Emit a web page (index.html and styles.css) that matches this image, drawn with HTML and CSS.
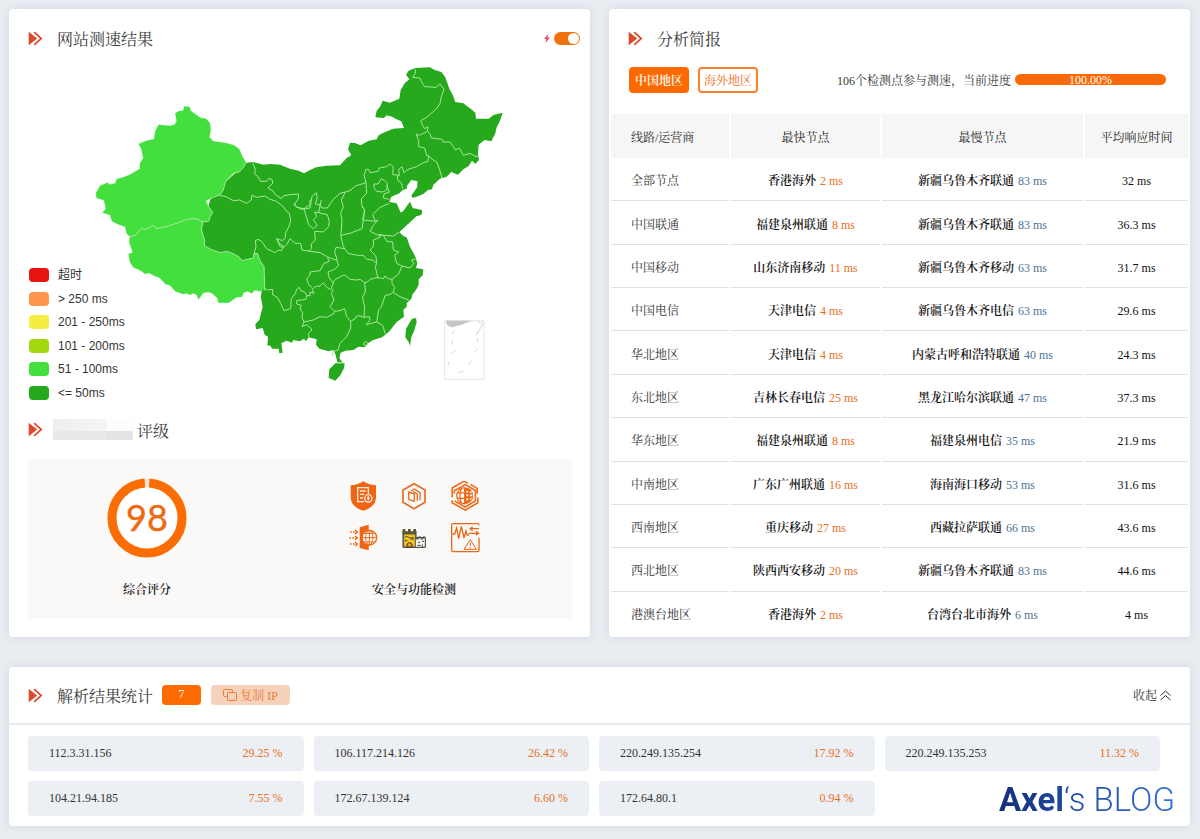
FILE: index.html
```html
<!DOCTYPE html>
<html lang="zh-CN">
<head>
<meta charset="utf-8">
<title>网站测速结果</title>
<link rel="stylesheet" href="styles.css">
</head>
<body>
<svg class="defs" aria-hidden="true">
  <symbol id="mark" viewBox="84 90 44 44"><path d="M86 92L111 112L86 132Z" fill="#dc4b2b"/><path d="M97 92l23 20-23 20" fill="none" stroke="#fff" stroke-width="5"/><path d="M102 93l21 19-21 19" fill="none" stroke="#dc4b2b" stroke-width="5"/></symbol>
</svg>
<main class="page">
  <section class="card result">
    <header class="head">
      <svg class="mark"><use href="#mark"/></svg>
      <h2 class="title">网站测速结果</h2>
      <label class="switch">
        <svg class="bolt" viewBox="0 0 6 9"><path d="M4 0L0 5h2.3L1.6 9 6 3.6H3.6z" fill="#e64b5f"/></svg>
        <input class="toggle" type="checkbox" checked aria-label="快速测速">
      </label>
    </header>
    <div class="mapbox">
      <svg class="map" viewBox="0 51 1290 999" role="img" aria-label="中国地图">
        <g fill="#26a91c">
          <path transform="translate(450 0)" d="M50 338L70 336 100 344 122 342 150 344 180 356 206 362 222 370 236 362 258 352 290 347 330 346 350 324 364 316 354 298 360 278 375 279 392 286 416 272 440 268 446 256 460 248 490 236 522 234 514 214 500 208 486 200 470 196 462 204 436 202 440 182 450 170 458 152 480 158 508 146 512 120 524 100 538 88 528 74 536 62 556 54 600 52 614 60 634 66 646 82 658 116 668 134 676 156 700 160 722 176 736 188 738 206 776 206 792 194 818 188 810 212 800 232 796 250 784 274 764 270 746 284 744 312 747 330 736 342 726 332 716 348 700 358 684 374 664 366 650 380 630 386 610 404 606 418 594 420 580 432 566 438 548 444 544 436 552 426 562 410 562 394 544 390 532 406 530 416 518 420 508 430 484 440 478 456 500 460 512 488 520 484 532 466 540 456 548 474 576 480 574 494 560 498 508 546 490 565 -60 565 -75 516 -60 450 -18 400Z"/>
          <path transform="translate(450 450)" d="M440 0L478 8 500 12 504 34 514 38 532 22 540 6 548 26 576 32 574 44 552 50 540 66 520 82 508 96 520 108 530 112 540 140 556 170 562 190 558 204 580 208 578 226 566 238 566 254 558 270 548 282 544 296 530 310 530 320 520 330 522 350 500 366 486 384 478 394 466 404 456 412 430 420 410 432 404 442 386 440 370 450 346 452 332 458 328 474 338 488 322 486 316 462 310 450 296 454 268 446 258 434 260 418 236 412 228 424 222 416 210 424 190 420 186 428 170 422 154 430 158 458 148 460 146 446 126 446 122 438 112 436 114 410 104 404 98 384 78 388 76 372 88 360 92 344 98 320 92 290 96 270 90 195 40 195 -20 170 -74 145 -86 80 -50 0Z"/>
          <path transform="translate(450 450)" d="M298 508L316 490 344 490 342 504 332 524 316 542 296 534ZM546 356L558 354 560 366 552 394 544 410 540 438 536 426 526 412 528 386Z"/>
        </g>
        <g fill="#42df3d" stroke="#42df3d" stroke-width="1">
          <path d="M312 170L328 170 332 182 348 194 362 204 378 206 390 220 392 240 388 262 400 274 440 280 462 286 478 298 486 318 498 338 490 352 478 366 462 368 446 384 436 396 430 420 420 434 400 442 378 452 386 470 398 488 390 500 386 514 368 516 350 506 320 508 296 518 285 524 265 528 240 534 228 536 222 526 212 530 200 538 184 536 166 556 150 560 140 550 136 530 118 524 96 514 90 494 68 488 78 476 72 450 50 444 48 430 60 408 82 398 90 404 106 400 110 388 130 382 150 374 180 356 180 340 190 324 184 296 176 282 200 272 222 268 226 244 236 224 250 226 270 228 284 224 290 212 286 190 296 184 310 182Z"/>
          <path d="M150 560L166 556 184 536 200 538 212 530 222 526 228 536 265 528 296 518 320 508 350 506 368 516 364 540 374 572 372 586 392 598 420 608 440 604 462 612 478 622 486 632 500 628 520 624 522 612 532 610 540 632 552 650 554 700 550 720 540 724 524 720 516 730 502 724 490 728 486 740 470 742 460 748 446 758 416 758 412 744 396 730 386 726 370 728 356 748 350 734 340 730 330 734 320 730 310 732 286 724 270 706 256 702 240 684 220 676 206 668 196 672 180 660 160 652 150 636 146 612 158 608 156 600 148 578Z"/>
        </g>
        <g fill="none" stroke="#a5e79c" stroke-width="3" stroke-linejoin="round">
          <path d="M498 338L490 352 478 366 462 368 446 384 436 396 430 420 420 434 400 442 378 452 386 470 398 488 390 500 386 514 368 516 364 540 374 572 372 586 392 598 420 608 440 604 462 612 478 622 486 632 500 628 520 624 522 612 532 610 540 632 552 650 554 700 554 722M150 560L166 556 184 536 200 538 212 530 222 526 228 536 265 528 296 518 320 508 350 506 368 516M418 436L438 440 460 452 478 450 500 460 514 450 516 436 530 442 556 438 570 448 590 454 610 470 618 482 628 490 632 512 626 532 616 550 616 564 608 572 590 566 600 582 612 590 604 602 594 600 586 608 560 596 545 574 534 568 526 572 528 590 522 612"/>
          <path transform="translate(450 0)" d="M68 338L76 358 74 372 84 380 92 394 110 394 116 386 126 388 128 400 114 414 130 424 136 434 154 446 160 438 180 434 206 432 204 448 192 464 200 470 214 478 240 474 246 440 258 428 262 442 256 462 270 464 276 474 292 474 304 456 312 446 330 430 346 426 360 422 376 408 408 398 402 376 408 358 416 358 420 368 444 364 448 354 470 350 480 342 490 350 488 374 508 376 506 358 516 350 522 368 534 358 560 350 580 338 594 334 596 318M556 58L556 70 548 82 570 84 576 98 584 110 618 112 630 102 642 118 634 140 630 160 620 176 606 188 590 202 572 212 578 226 584 236 594 230 592 244 600 252 604 264 636 268 640 276 660 276 672 292 676 300 688 294 700 316 720 310 734 318 746 320M592 244L580 250 568 256 558 252 566 272 566 290 584 294 590 316 596 318 610 330 620 336 628 356 636 384M508 376L502 380 504 392 514 398 518 416M432 402L444 402 454 386 464 392 472 400 470 420 458 426 440 424 432 414ZM470 406L478 426 462 432 460 444 478 448M408 398L410 430 394 446 396 470 404 480 398 510M346 426L334 450 340 470 332 490 336 510 334 540 332 556"/>
          <path transform="translate(450 450)" d="M192 8L200 22 222 26 232 60 236 74 250 86 262 76 250 60 260 50 254 36 266 38 270 16 274 0M240 0L240 14 222 26M266 38L292 44 298 64 296 80 280 96 254 94 256 120 244 132 244 146 236 154M140 116L150 140 162 142 170 134 180 116 196 130 212 130 216 150 240 154 270 158 292 170 310 178 320 180 326 196 314 208 294 216 298 234 310 250 304 264 310 272 304 280 312 300 300 320 314 334M344 146L318 142 314 156 322 180M332 106L340 140 354 160 382 166 400 166 410 178 428 180 440 190 436 200 444 236M398 20L404 30 400 60 396 86 360 100 332 106M400 60L436 64 428 44 450 22 478 10M436 64L444 60 430 76 420 94 440 104 460 106 490 108 508 96M440 190L438 170 430 160 420 150 430 140 430 120 450 112 448 104 460 106 470 124 488 126 490 150 506 156 494 166 500 190 516 198 540 204 552 190 544 180 556 178M516 198L506 222 486 238 474 236 464 228 460 236 442 232 420 238 412 246 404 248 390 238 380 240 360 238 346 226 340 226 316 238 308 250M404 248L406 276 398 290 400 306 404 320 402 352 390 348 380 348 376 356 362 364 350 350 344 326 330 332 314 334 310 342 290 352 270 350 250 360 222 366 216 352 218 338 210 326 214 316 200 312 200 302 228 298 230 286 240 288 240 276 252 280 246 268 256 260 270 258 280 248 290 262 304 270M230 286L224 276 212 272 208 262 200 268 196 280 184 296 182 326 162 332 152 310 142 292 128 284 128 268 112 270 104 264M222 366L216 380 230 374 240 382 246 390 236 400 236 412M362 364L362 384 350 410 330 430 324 450 308 456 308 468M402 352L418 350 420 360 408 374 424 370 440 366 458 376 466 402M440 366L446 330 454 320 466 286 480 284 490 276 494 262 486 250 486 238M490 278L510 290 536 300M292 172L298 184 282 190 270 212 240 216 240 226 230 236 236 254 246 262M400 430L408 424 414 432 406 440ZM322 488L340 488"/>
        </g>
        <g transform="translate(1020 750)" fill="none" stroke="#d5d5d5" stroke-width="3">
          <path d="M74 62H192V238H74Z" stroke="#e6e6e6"/><path d="M78 62H156L120 76 94 82 80 74Z" fill="#c6c6c6" stroke="none"/>
          <path d="M96 102l8-10M97 120v14M94 162l12-10M86 186v8M114 218l16-4M146 194l8-12M164 156l9-10M172 116v12M168 106l10-16 12-20M174 62l8 10 6-8"/>
        </g>
      </svg>
      <ul class="legend">
        <li><i class="chip timeout"></i>超时</li>
        <li><i class="chip slow"></i>&gt; 250 ms</li>
        <li><i class="chip fair"></i>201 - 250ms</li>
        <li><i class="chip good"></i>101 - 200ms</li>
        <li><i class="chip fast"></i>51 - 100ms</li>
        <li><i class="chip best"></i>&lt;= 50ms</li>
      </ul>
    </div>
    <header class="head rating-head">
      <svg class="mark"><use href="#mark"/></svg>
      <span class="masked"></span>
      <h2 class="title">评级</h2>
    </header>
    <div class="rating">
      <div class="score">
        <svg class="ring" viewBox="0 0 80 80">
          <circle cx="40" cy="40" r="35" fill="#fff" stroke="#fde3cf" stroke-width="8"/>
          <circle cx="40" cy="40" r="35" fill="none" stroke="#fb6d02" stroke-width="9" pathLength="100" stroke-dasharray="98 2" stroke-dashoffset="-1" transform="rotate(-90 40 40)"/>
          <text class="ring-text" x="40" y="53" text-anchor="middle">98</text>
        </svg>
        <p class="caption">综合评分</p>
      </div>
      <div class="checks">
        <div class="icons">
          <svg viewBox="49 47 90 90"><path d="M95 48Q76 60 57 60V98Q59 126 95 136Q131 126 133 98V60Q114 60 95 48Z" fill="#ee6614"/><g fill="none" stroke="#fde9db" stroke-width="4"><path d="M110 85V67H78V109H98M85 77H103M85 87H98M85 98H94"/><circle cx="110" cy="99" r="11"/><path d="M110 93v11M106 98h8"/></g></svg>
          <svg viewBox="202 47 90 90" fill="none" stroke="#e96b20" stroke-width="5" stroke-linejoin="round"><path d="M247 55L280 74V111L247 130 214 111V74Z"/><path d="M231 80L248 86V108L231 102ZM238 77L248 71 265 82V105M244 78L257 86V106" stroke-width="4"/></svg>
          <svg viewBox="353 45 94 98" fill="none" stroke="#ee6614" stroke-width="5"><path d="M358 98V68L396 46L410 52M418 56L440 69V87M442 99V116L401 140 358 116V108M365 86V77L401 57 434 76V110L401 130 366 110"/><path d="M400 66A27 27 0 0 1 400 120Z" fill="#ee6614" stroke="none"/><path d="M399 67A26 26 0 0 0 399 119M375 84H399M375 102H399M388 70Q379 93 388 116M399 66V122" stroke-width="4"/><path d="M404 80h7M416 82h6M404 92h7M416 92h8M404 105h7M416 103h5" stroke="#fff" stroke-width="5"/></svg>
          <svg viewBox="49 172 90 90" fill="none" stroke="#ee6614" stroke-width="4"><path d="M84 185L111 177V254L84 247Z" fill="#ee6614" stroke="none"/><circle cx="113" cy="216" r="22" fill="#fff"/><path d="M91 216H135M113 194V238M97 203H129M97 229H129" stroke-width="3"/><ellipse cx="113" cy="216" rx="11" ry="22" stroke-width="3"/><path d="M55 199H76M53 217H76M55 235H76" stroke-dasharray="5 4"/><path d="M70 193l7 6-7 6M70 211l7 6-7 6M70 229l7 6-7 6"/></svg>
          <svg viewBox="202 172 90 90"><path d="M214 196V245H281V216H253V196" fill="#f7f5ef" stroke="#333" stroke-width="3"/><path d="M213 190h8v7h8v-7h8v7h8v-7h8v18h-40z" fill="#595632" /><path d="M216 205H251V244H216Z" fill="#f4c51c" stroke="#555" stroke-width="3"/><path d="M219 215q6-6 12 0t14 0M219 225h8M237 220h10M254 214v6h6v-6h8v6h6v-6h7M259 230h6M271 227h6M257 239h10M272 236v9" fill="none" stroke="#444" stroke-width="3"/><path d="M226 244V235q8-9 15 0v9z" fill="#f39a20" stroke="#333" stroke-width="3"/></svg>
          <svg viewBox="355 172 90 90" fill="none" stroke="#ea6719" stroke-width="4"><path d="M442 216V253Q442 258 437 258H365Q360 258 360 253V179Q360 174 365 174H437Q442 174 442 179"/><path d="M362 205H369L375 187 381 219 389 182 397 217 403 196 407 208H413"/><path d="M442 189H416L423 183M416 189l7 6M412 203H440L433 197M440 203l-7 6"/><path d="M416 222L434 251H397ZM416 231V241M416 244V248" stroke-width="3"/></svg>
        </div>
        <p class="caption">安全与功能检测</p>
      </div>
    </div>
  </section>

  <section class="card report">
    <header class="head">
      <svg class="mark"><use href="#mark"/></svg>
      <h2 class="title">分析简报</h2>
    </header>
    <div class="toolbar">
      <button class="tab active" type="button">中国地区</button>
      <button class="tab" type="button">海外地区</button>
      <span class="status">106个检测点参与测速，当前进度</span>
      <div class="progress">100.00%</div>
    </div>
    <table class="table">
      <colgroup><col class="c1"><col class="c2"><col class="c3"><col class="c4"></colgroup>
      <thead><tr><th>线路/运营商</th><th>最快节点</th><th>最慢节点</th><th>平均响应时间</th></tr></thead>
      <tbody>
        <tr><td>全部节点</td><td><b>香港海外</b> <span class="min">2 ms</span></td><td><b>新疆乌鲁木齐联通</b> <span class="max">83 ms</span></td><td>32 ms</td></tr>
        <tr><td>中国联通</td><td><b>福建泉州联通</b> <span class="min">8 ms</span></td><td><b>新疆乌鲁木齐联通</b> <span class="max">83 ms</span></td><td>36.3 ms</td></tr>
        <tr><td>中国移动</td><td><b>山东济南移动</b> <span class="min">11 ms</span></td><td><b>新疆乌鲁木齐移动</b> <span class="max">63 ms</span></td><td>31.7 ms</td></tr>
        <tr><td>中国电信</td><td><b>天津电信</b> <span class="min">4 ms</span></td><td><b>新疆乌鲁木齐电信</b> <span class="max">63 ms</span></td><td>29.6 ms</td></tr>
        <tr><td>华北地区</td><td><b>天津电信</b> <span class="min">4 ms</span></td><td><b>内蒙古呼和浩特联通</b> <span class="max">40 ms</span></td><td>24.3 ms</td></tr>
        <tr><td>东北地区</td><td><b>吉林长春电信</b> <span class="min">25 ms</span></td><td><b>黑龙江哈尔滨联通</b> <span class="max">47 ms</span></td><td>37.3 ms</td></tr>
        <tr><td>华东地区</td><td><b>福建泉州联通</b> <span class="min">8 ms</span></td><td><b>福建泉州电信</b> <span class="max">35 ms</span></td><td>21.9 ms</td></tr>
        <tr><td>中南地区</td><td><b>广东广州联通</b> <span class="min">16 ms</span></td><td><b>海南海口移动</b> <span class="max">53 ms</span></td><td>31.6 ms</td></tr>
        <tr><td>西南地区</td><td><b>重庆移动</b> <span class="min">27 ms</span></td><td><b>西藏拉萨联通</b> <span class="max">66 ms</span></td><td>43.6 ms</td></tr>
        <tr><td>西北地区</td><td><b>陕西西安移动</b> <span class="min">20 ms</span></td><td><b>新疆乌鲁木齐联通</b> <span class="max">83 ms</span></td><td>44.6 ms</td></tr>
        <tr><td>港澳台地区</td><td><b>香港海外</b> <span class="min">2 ms</span></td><td><b>台湾台北市海外</b> <span class="max">6 ms</span></td><td>4 ms</td></tr>
      </tbody>
    </table>
  </section>

  <section class="card resolve">
    <header class="head resolve-head">
      <svg class="mark"><use href="#mark"/></svg>
      <h2 class="title">解析结果统计</h2>
      <span class="count">7</span>
      <button class="copy" type="button"><svg class="copy-icon" viewBox="0 0 14 12" fill="none" stroke="currentColor"><path d="M9.500 3V1.500Q9.500.5 8.500.5H1.500Q.5.5.5 1.500V6.500Q.5 7.500 1.500 7.500H3.500"/><rect x="4.500" y="3.500" width="9" height="8" rx="1"/></svg><span class="copy-text">复制 IP</span></button>
      <button class="fold" type="button"><span class="fold-text">收起</span><svg class="fold-icon" viewBox="0 0 11 11" fill="none" stroke="currentColor"><path d="M.5 5.500L5.500 1l5 4.500M.5 10L5.500 5.500l5 4.500"/></svg></button>
    </header>
    <ul class="ips">
      <li><span>112.3.31.156</span><span class="min">29.25 %</span></li>
      <li><span>106.117.214.126</span><span class="min">26.42 %</span></li>
      <li><span>220.249.135.254</span><span class="min">17.92 %</span></li>
      <li><span>220.249.135.253</span><span class="min">11.32 %</span></li>
      <li><span>104.21.94.185</span><span class="min">7.55 %</span></li>
      <li><span>172.67.139.124</span><span class="min">6.60 %</span></li>
      <li><span>172.64.80.1</span><span class="min">0.94 %</span></li>
    </ul>
    <div class="brand"><strong>Axel</strong>‘s BLOG</div>
  </section>
</main>
</body>
</html>
```
FILE: styles.css
```css
* { box-sizing: border-box; }
body {
  margin: 0;
  background: #e9edf2;
  color: #333;
  font: 12px/20px "Liberation Serif", "Noto Serif CJK SC", "Noto Sans CJK SC", serif;
}
h2, p, ul { margin: 0; padding: 0; }
ul { list-style: none; }
button { font: inherit; cursor: pointer; }
.defs { display: none; }
.page {
  display: grid;
  grid-template-columns: 1fr 1fr;
  column-gap: 19px;
  row-gap: 30px;
  padding: 9px 10px 13px 9px;
}
.card {
  background: #fff;
  border-radius: 4px;
  box-shadow: 0 0 8px rgba(60, 80, 110, .13);
}
.head {
  display: flex;
  align-items: center;
  height: 58px;
  padding: 0 19px;
}
.mark { width: 15px; height: 15px; margin-right: 14px; flex: none; }
.title { padding-top: 4px; font-size: 16px; font-weight: 400; line-height: 24px; color: #3c3c3c; }

.switch { display: flex; align-items: center; gap: 4px; margin-left: auto; margin-right: -9px; }
.bolt { width: 6px; height: 9px; }
.toggle {
  appearance: none;
  display: flex;
  align-items: center;
  justify-content: flex-end;
  width: 26px;
  height: 13px;
  margin: 0;
  padding: 1px;
  border-radius: 7px;
  background: #f0700a;
}
.toggle::before { content: ""; width: 11px; height: 11px; border-radius: 50%; background: #fff; }
.mapbox { display: grid; }
.map { grid-area: 1 / 1; width: 430px; height: 333px; margin-left: 71px; }
.legend {
  grid-area: 1 / 1;
  align-self: end;
  justify-self: start;
  display: flex;
  flex-direction: column;
  justify-content: space-between;
  height: 132px;
  padding-left: 20px;
  font-family: "Liberation Sans", "Noto Sans CJK SC", sans-serif;
}
.legend li { display: flex; align-items: center; gap: 9px; height: 14px; line-height: 14px; }
.chip { width: 20px; height: 14px; border-radius: 4px; }
.timeout { background: #e8140f; }
.slow { background: #ff964b; }
.fair { background: #f5ee42; }
.good { background: #a3d80c; }
.fast { background: #42df3d; }
.best { background: #26a91c; }
.rating-head { height: 59px; }
.rating-head .mark { margin-right: 10px; }
.masked {
  width: 80px;
  height: 21px;
  margin-right: 4px;
  background: linear-gradient(90deg, #eee, #f6f6f6 54px, #fdfdfd 54px) top / 100% 12px no-repeat,
    linear-gradient(90deg, #e9e9e9 54px, #e4e4e4 54px);
}
.rating {
  display: grid;
  grid-template-columns: 7fr 9fr;
  margin: 0 18px 18px 19px;
  padding: 19px 0;
  background: #faf9f7;
  color: #222;
}
.score, .checks { display: flex; flex-direction: column; align-items: center; gap: 22px; }
.checks { padding-right: 10px; }
.ring { width: 80px; height: 80px; }
.ring-text { font: 36px Lato, sans-serif; fill: #ec6a12; stroke: #ec6a12; stroke-width: .4px; }
.caption { padding-top: 1px; line-height: 19px; font-weight: 600; }
.icons {
  display: grid;
  grid-template-columns: repeat(3, 30px);
  align-content: start;
  gap: 12px 21px;
  height: 80px;
  padding-top: 3px;
}
.icons svg { width: 30px; height: 30px; }

.toolbar { display: flex; align-items: center; gap: 9px; padding: 0 24px 0 20px; height: 25px; }
.tab {
  width: 60px;
  height: 26px;
  padding: 2px 0 0;
  border: 2px solid #f8802b;
  border-radius: 4px;
  background: #fff;
  color: #ef6a17;
  line-height: 20px;
}
.tab.active { background: #ff6a00; border-color: #ff6a00; color: #fff; font-weight: 600; }
.status { margin-left: auto; margin-right: -5px; padding-top: 2px; }
.progress { width: 151px; height: 11px; border-radius: 6px; background: #fb6a04; color: #fff; line-height: 12px; text-align: center; }
.table {
  width: 100%;
  height: 521px;
  margin-top: 22px;
  border-spacing: 2px 0;
  table-layout: fixed;
  text-align: center;
}
.c1 { width: 20.7%; }
.c2 { width: 26%; }
.c3 { width: 35.3%; }
.table th { height: 44px; padding: 4px 0 0; background: #f6f6f6; font-weight: 400; color: #222; }
.table td { height: 43px; padding: 4px 0 0; border-bottom: 1px solid #dfe2e6; color: #111; }
.table tr > :first-child { padding-left: 20px; text-align: left; color: #333; }
.table tr:last-child td { border-bottom: 0; }
.table b { font-weight: 600; margin-right: 1px; }
.min { color: #e87024; }
.table .max { color: #4d7393; }

.resolve { position: relative; grid-column: 1 / -1; padding-bottom: 10px; }
.resolve-head { border-bottom: 2px solid #e8eaed; margin-bottom: 11px; }
.count {
  width: 39px;
  height: 20px;
  margin: 0 10px 0 9px;
  border-radius: 4px;
  background: #ff6a00;
  color: #fff;
  line-height: 18px;
  text-align: center;
}
.copy {
  display: flex;
  align-items: center;
  justify-content: center;
  gap: 3px;
  width: 79px;
  height: 20px;
  padding: 0;
  border: 0;
  border-radius: 4px;
  background: #f6d2bb;
  color: #ec7a38;
}
.copy-text, .fold-text { padding-top: 2px; }
.copy-icon { width: 14px; height: 12px; }
.fold { display: flex; align-items: center; gap: 3px; margin-left: auto; padding: 0; border: 0; background: none; color: #333; }
.fold-icon { width: 11px; height: 11px; }
.ips { display: grid; grid-template-columns: repeat(4, 1fr); gap: 10px; padding: 0 30px 0 19px; }
.ips li {
  display: flex;
  justify-content: space-between;
  padding: 0 21px;
  border-radius: 4px;
  background: #eceff3;
  line-height: 35px;
}
.brand {
  position: absolute;
  right: 15px;
  bottom: 6px;
  font: 300 33px/40px Roboto, sans-serif;
  background: linear-gradient(90deg, #142f7c, #3271d6);
  background-clip: text;
  color: transparent;
}
.brand strong { font-weight: 700; }
```
